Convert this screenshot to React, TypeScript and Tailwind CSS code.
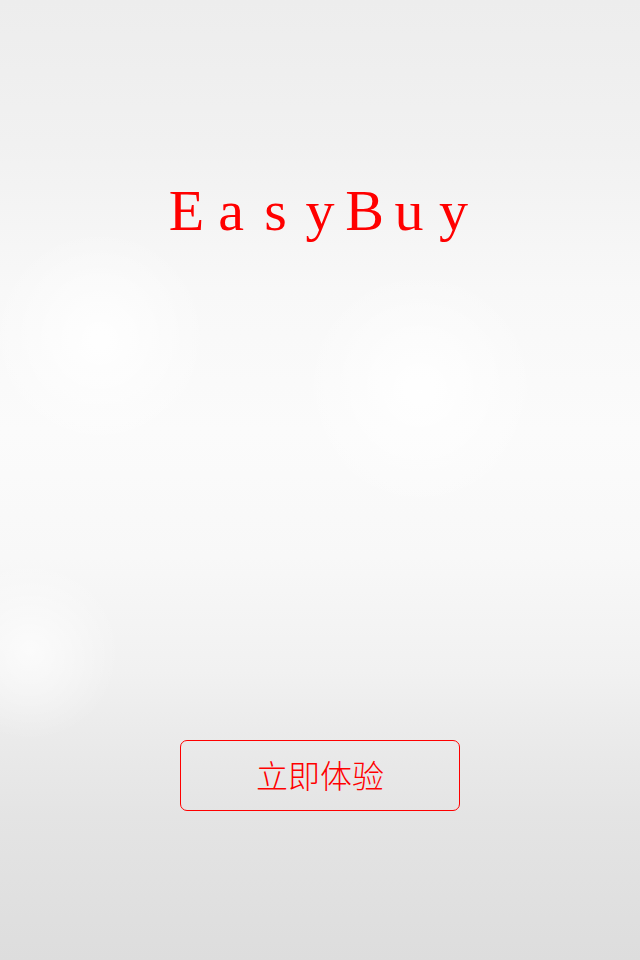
import React from "react";

const letters = ["E", "a", "s", "y", "B", "u", "y"];

export default function App() {
  return (
    <div className="relative flex h-[960px] w-[640px] flex-col items-center overflow-hidden bg-[linear-gradient(180deg,#ededed_0%,#f1f1f1_15%,#f8f8f8_30%,#fbfbfb_45%,#f8f8f8_58%,#f1f1f1_70%,#ebebeb_76%,#e4e4e4_85%,#dddddd_100%)]">
      <div className="pointer-events-none absolute inset-0 bg-[radial-gradient(circle_at_100px_340px,rgba(255,255,255,0.9)_0px,rgba(255,255,255,0)_110px),radial-gradient(circle_at_420px_390px,rgba(255,255,255,0.9)_0px,rgba(255,255,255,0)_120px),radial-gradient(circle_at_30px_650px,rgba(255,255,255,0.7)_0px,rgba(255,255,255,0)_90px)]" />
      <h1 aria-label="EasyBuy" className="relative mt-[182px] flex font-['Liberation_Serif'] text-[58px] leading-[58px] text-[#ff0000]">
        {letters.map((l, i) => (
          <span key={i} className="w-[44.5px] text-center">
            {l}
          </span>
        ))}
      </h1>
      <button className="relative mt-[500px] flex h-[71px] w-[280px] items-center justify-center rounded-[7px] border border-[#ff0000] bg-transparent pb-[3px] font-['Noto_Sans_CJK_SC'] text-[32px] font-light text-[#ff0000]">
        立即体验
      </button>
    </div>
  );
}
